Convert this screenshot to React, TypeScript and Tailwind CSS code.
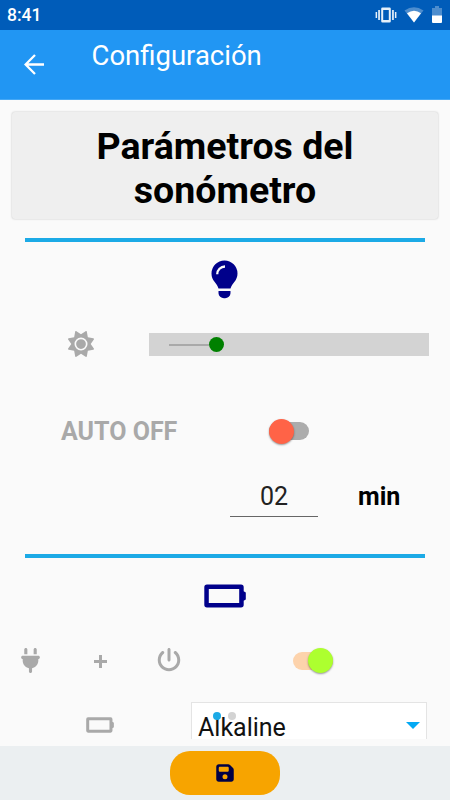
import { useState } from "react"
import { FaFloppyDisk, FaPlug, FaPowerOff, FaSun } from "react-icons/fa6"

const StatusBar = () => {
  return (
    <div className="flex h-[30px] items-center justify-between bg-[#005cb9] pl-[7px] pr-2 text-white">
      <span className="pt-[2px] text-[17.5px] font-medium leading-none">8:41</span>
      <div className="flex h-full items-center">
        <svg width="22" height="18" viewBox="0 0 22 18" fill="#e6f0f9">
          <path d="M0.6 6h1.5v6H0.6zM3.2 4h1.7v10H3.2zM17.1 4h1.7v10h-1.7zM19.9 6h1.5v6h-1.5z" />
          <path fillRule="evenodd" d="M7.5 1.4h7a1.3 1.3 0 0 1 1.3 1.3v12.6a1.3 1.3 0 0 1-1.3 1.3h-7a1.3 1.3 0 0 1-1.3-1.3V2.7a1.3 1.3 0 0 1 1.3-1.3zM8.2 4v10h5.6V4z" />
        </svg>
        <svg className="ml-[7px]" width="20" height="16" viewBox="0 0 20 16">
          <path d="M0.5 3.6Q10-3.2 19.5 3.6L10 15.5z" fill="#4d8dce" />
          <path d="M3 6.3Q10 1 17 6.3L10 15.5z" fill="#fff" />
        </svg>
        <svg className="mb-px ml-2" width="10" height="17" viewBox="0 0 10 17">
          <path d="M3 0h4v2h3v8H0V2h3z" fill="#4d8dce" />
          <path d="M0 9.5h10V16a1 1 0 0 1-1 1H1a1 1 0 0 1-1-1z" fill="#fff" />
        </svg>
      </div>
    </div>
  )
}

const Header = () => {
  return (
    <header className="flex h-[70px] border-b border-[#45a8f5] bg-[#2196f3] text-white">
      <button className="ml-6 mt-6 h-[21px] w-5">
        <svg width="20" height="21" viewBox="0 0 20 21" fill="none" stroke="#fff" strokeWidth="2.3">
          <path d="M20 10.5H2M11 1L1.6 10.5L11 20" />
        </svg>
      </button>
      <h1 className="ml-[47.5px] mt-[9px] text-[27.5px] leading-[34px]">Configuración</h1>
    </header>
  )
}

const Bulb = () => {
  return (
    <svg width="27" height="39" viewBox="0 0 27 39" fill="#00008b">
      <path d="M13.5 0.5a13 13 0 0 1 13 13c0 3.300-1.200 6.200-3.200 8.500-1.500 1.800-3.100 4-3.800 6.500H7.500c-0.700-2.500-2.300-4.700-3.800-6.500a12.800 12.800 0 0 1-3.200-8.500a13 13 0 0 1 13-13z" />
      <path d="M7.5 31h12v2.200a5.400 5.400 0 0 1-5.400 5.100h-1.200a5.400 5.400 0 0 1-5.400-5.100z" />
      <path d="M6.200 14.300a7.800 7.800 0 0 1 7.800-7.800" fill="none" stroke="#fafafa" strokeWidth="2.300" />
    </svg>
  )
}

const Battery = ({ className }: { className: string }) => {
  return (
    <svg className={className} viewBox="0 0 42 24" fill="currentColor">
      <path fillRule="evenodd" d="M3 0.5h34a2.7 2.7 0 0 1 2.7 2.7V7.2l2.1 1.3v7l-2.1 1.3v4a2.7 2.7 0 0 1-2.7 2.7H3a2.7 2.7 0 0 1-2.7-2.7V3.2A2.7 2.7 0 0 1 3 0.5zM4.8 5v14h30.4V5z" />
    </svg>
  )
}

const Toggle = ({ checked, onChange, trackColor, thumbColor }: { checked: boolean, onChange: () => void, trackColor: string, thumbColor: string }) => {
  return (
    <button role="switch" aria-checked={checked} onClick={onChange} className="flex h-[26px] w-10 items-center">
      <span className={`flex h-[18px] w-full items-center rounded-full ${trackColor} ${checked ? "justify-end" : "justify-start"}`}>
        <span className={`h-[25px] w-[25px] shrink-0 rounded-full shadow-[0_1px_2px_rgba(0,0,0,0.4)] ${thumbColor}`} />
      </span>
    </button>
  )
}

const Divider = () => <div className="mx-[25px] h-1 bg-[#1caae6]" />

const App = () => {
  const [autoOff, setAutoOff] = useState(false)
  const [powerPlug, setPowerPlug] = useState(true)
  const [minutes, setMinutes] = useState("02")

  return (
    <div className="flex h-[800px] w-[450px] flex-col overflow-hidden bg-[#fafafa] font-['Roboto',sans-serif]">
      <StatusBar />
      <Header />

      <main className="flex h-[639px] flex-col overflow-hidden">
        <div className="mx-3 mt-3 flex h-[107px] shrink-0 items-center justify-center rounded-[3px] bg-[#efefef] shadow-[0_0_2px_rgba(0,0,0,0.25)]">
          <h2 className="w-[300px] pt-1 text-center text-[37.5px] font-bold leading-[44px] text-black">Parámetros del sonómetro</h2>
        </div>

        <div className="mt-[19px] shrink-0"><Divider /></div>
        <div className="mt-[18px] flex h-[39px] shrink-0 justify-center pr-[2px]">
          <Bulb />
        </div>

        {/* brightness */}
        <div className="mt-[34px] flex h-[23px] shrink-0 items-center pl-[68px]">
          <FaSun className="mb-[2px] h-[26px] w-[26px] shrink-0 text-[#a9a9a9]" />
          <div className="ml-[55px] flex h-[23px] w-[280px] items-center bg-[#d3d3d3] pl-5">
            <div className="h-[2px] w-10 bg-[#a9a9a9]" />
            <div className="h-[15px] w-[15px] rounded-full bg-[#008000]" />
          </div>
        </div>

        {/* auto off */}
        <div className="mt-[62px] flex h-[26px] shrink-0 items-center pl-[61px]">
          <span className="w-[208px] pt-px text-[25px] font-bold leading-none text-[#a9a9a9]">AUTO OFF</span>
          <Toggle checked={autoOff} onChange={() => setAutoOff(!autoOff)} trackColor="bg-[#acacac]" thumbColor="bg-[#ff6347]" />
        </div>
        <div className="mt-9 flex h-[37px] shrink-0 pl-[230px]">
          <input
            className="h-[37px] w-[88px] border-b border-[#666] bg-transparent pb-1 text-center text-[25px] leading-[30px] text-[#222] outline-none"
            value={minutes}
            onChange={(e) => setMinutes(e.target.value)}
          />
          <span className="ml-10 text-[25px] font-bold leading-[33px] text-black">min</span>
        </div>

        <div className="mt-[37px] shrink-0"><Divider /></div>
        <div className="mt-[26px] flex h-6 shrink-0 items-center justify-center">
          <Battery className="h-6 w-[42px] text-[#00008b]" />
        </div>

        {/* power sources */}
        <div className="mt-[39px] flex h-[27px] shrink-0 items-center text-[#a9a9a9]">
          <FaPlug className="ml-[21px] h-[25px] w-[19px]" />
          <svg className="ml-[54px] mt-[2px]" width="13" height="13" viewBox="0 0 13 13" fill="currentColor">
            <path d="M5 0h3v5h5v3H8v5H5V8H0V5h5z" />
          </svg>
          <FaPowerOff className="mb-px ml-[50px] h-6 w-6" />
          <div className="ml-[112px]">
            <Toggle checked={powerPlug} onChange={() => setPowerPlug(!powerPlug)} trackColor="bg-[#fdd3ac]" thumbColor="bg-[#adff2f]" />
          </div>
        </div>

        <div className="mt-7 flex h-[37px] shrink-0 pl-[86px]">
          <Battery className="mt-[15px] h-4 w-7 shrink-0 text-[#a9a9a9]" />
          <div className="relative ml-[77px] flex h-[37px] w-[236px] items-center justify-between border border-b-0 border-[#e4e4e4] bg-white px-[6px]">
            <span className="mt-[13px] text-[25px] leading-[22px] text-[#111]">Alkaline</span>
            <svg className="mt-[9px]" width="14" height="7" viewBox="0 0 14 7" fill="#03a9f4">
              <path d="M0 0h14L7 7z" />
            </svg>
            {/* page indicator floats over the picker */}
            <div className="absolute left-[21px] top-[9px] flex gap-[7px]">
              <span className="h-2 w-2 rounded-full bg-[#1caae6]" />
              <span className="h-2 w-2 rounded-full bg-[#d3d3d3]" />
            </div>
          </div>
        </div>
      </main>

      <footer className="mt-[7px] flex h-[54px] justify-center bg-[#ebeff1] pt-[5px]">
        <button className="flex h-11 w-[110px] items-center justify-center rounded-[20px] bg-[#f7a400]">
          <FaFloppyDisk className="h-5 w-[18px] text-[#000045]" />
        </button>
      </footer>
    </div>
  )
}

export default App
